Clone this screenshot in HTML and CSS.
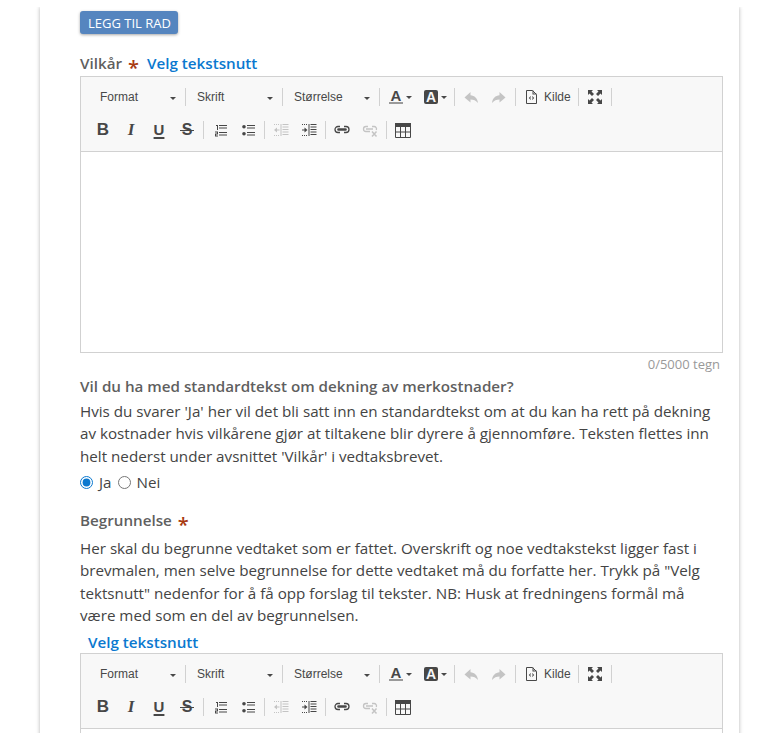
FILE: index.html
```html
<!DOCTYPE html>
<html lang="no">
<head>
  <meta charset="utf-8">
  <link rel="stylesheet" href="styles.css">
  <title>Vedtak</title>
</head>
<body>
  <!-- toolbar icons, used by both editors -->
  <svg class="icon-defs" width="0" height="0">
    <symbol id="i-ol" viewBox="0 0 16 16"><path d="M4 3h2v5H5V4H4zM3 9.500h3v3H4v1h2v1H3v-3h2v-1H3z"/><path d="M7 3h8v1H7zM7 5.500h8v1H7zM7 10h8v1H7zM7 12.500h8v1H7z"/></symbol>
    <symbol id="i-ul" viewBox="0 0 16 16"><circle cx="4" cy="4.800" r="1.800"/><circle cx="4" cy="11.800" r="1.800"/><path d="M7 3h8v1H7zM7 5.500h8v1H7zM7 10h8v1H7zM7 12.500h8v1H7z"/></symbol>
    <symbol id="i-outdent" viewBox="0 0 16 16"><path d="M7.500 2h1v12h-1zM9.500 2h6v1h-6zM9.500 4.500h6v1h-6zM9.500 7h6v1h-6zM9.500 9.500h6v1h-6zM9.500 12h6v1h-6z"/><path d="M1 8l3-2.500V7.500h2.500v1H4v2z"/><path d="M1 2h1v1H1zM3 2h1v1H3zM5 2h1v1H5zM1 13h1v1H1zM3 13h1v1H3zM5 13h1v1H5z"/></symbol>
    <symbol id="i-indent" viewBox="0 0 16 16"><path d="M7.500 2h1v12h-1zM9.500 2h6v1h-6zM9.500 4.500h6v1h-6zM9.500 7h6v1h-6zM9.500 9.500h6v1h-6zM9.500 12h6v1h-6z"/><path d="M6.500 8L3.500 5.500V7.500H1v1h2.500v2z"/><path d="M1 2h1v1H1zM3 2h1v1H3zM5 2h1v1H5zM1 13h1v1H1zM3 13h1v1H3zM5 13h1v1H5z"/></symbol>
    <symbol id="i-link" viewBox="0 0 16 16"><path fill="none" stroke="currentColor" stroke-width="1.300" d="M6 4.500H4a3 3 0 0 0 0 6h2M10 4.500h2a3 3 0 0 1 0 6h-2M4.500 6.800h7a.7.7 0 0 1 0 1.400h-7a.7.7 0 0 1 0-1.400z"/></symbol>
    <symbol id="i-unlink" viewBox="0 0 16 16"><path fill="none" stroke="currentColor" stroke-width="1.300" d="M6 4.500H4a2.500 2.500 0 0 0 0 5h4M10 4.500h2a2.500 2.500 0 0 1 2.300 3.500M4 7h7"/><path fill="none" stroke="currentColor" stroke-width="1.500" d="M10 9.500l4.500 5M14.500 9.500L10 14.500"/></symbol>
    <symbol id="i-table" viewBox="0 0 16 16"><path d="M0 1h16v4H0z"/><path fill="none" stroke="currentColor" d="M.5 4.500h15v11H.5zM.5 10h15M5.500 4.500v11M10.500 4.500v11"/></symbol>
    <symbol id="i-undo" viewBox="0 0 16 16"><path d="M7.500 3L1.500 8.500l6 5v-3c3 0 5.500 1 7.500 3.500-.5-5-3.500-7.500-7.500-7.800z"/></symbol>
    <symbol id="i-redo" viewBox="0 0 16 16"><path d="M8.500 3l6 5.500-6 5v-3c-3 0-5.500 1-7.500 3.500.5-5 3.500-7.500 7.500-7.800z"/></symbol>
    <symbol id="i-source" viewBox="0 0 16 16"><path fill="none" stroke="currentColor" d="M2.500 1.500h6l4 4v9h-10z"/><path d="M8.500 1.500v4h4v-1h-3v-3zM6.800 7L4.800 9l2 2v-1.300L6 9l.8-.7zM8.200 7l2 2-2 2V9.700L9 9l-.8-.7z"/></symbol>
    <symbol id="i-maximize" viewBox="0 0 16 16"><path d="M1 1h5L4.500 2.500 7 5 5 7 2.500 4.500 1 6zM15 1v5l-1.500-1.500L11 7 9 5l2.500-2.500L10 1zM1 15v-5l1.500 1.500L5 9l2 2-2.500 2.500L6 15zM15 15h-5l1.500-1.500L9 11l2-2 2.500 2.500L15 10z"/></symbol>
  </svg>

  <div class="page">
    <main class="card">
      <button class="add-row" type="button">Legg til rad</button>

      <div class="label-row label-row-first">
        <span class="field-label">Vilkår</span>
        <span class="required">*</span>
        <a class="snippet-link" href="#">Velg tekstsnutt</a>
      </div>

      <div class="editor">
        <div class="toolbar">
          <div class="tool-row tool-row-combos">
            <span class="combo">Format<i class="caret"></i></span><span class="sep"></span>
            <span class="combo">Skrift<i class="caret"></i></span><span class="sep"></span>
            <span class="combo">Størrelse<i class="caret"></i></span><span class="sep"></span>
            <span class="tool tool-drop"><span class="letter-color">A</span><i class="color-bar"></i><i class="caret"></i></span>
            <span class="tool tool-drop"><span class="letter-bg">A</span><i class="caret"></i></span><span class="sep"></span>
            <span class="tool off"><svg class="icon"><use href="#i-undo"/></svg></span>
            <span class="tool off"><svg class="icon"><use href="#i-redo"/></svg></span><span class="sep"></span>
            <span class="tool tool-source"><svg class="icon"><use href="#i-source"/></svg>Kilde</span><span class="sep"></span>
            <span class="tool"><svg class="icon"><use href="#i-maximize"/></svg></span><span class="sep"></span>
          </div>
          <div class="tool-row">
            <span class="tool letter">B</span>
            <span class="tool letter letter-italic">I</span>
            <span class="tool letter letter-underline">U</span>
            <span class="tool letter letter-strike">S</span><span class="sep"></span>
            <span class="tool"><svg class="icon"><use href="#i-ol"/></svg></span>
            <span class="tool"><svg class="icon"><use href="#i-ul"/></svg></span><span class="sep"></span>
            <span class="tool off"><svg class="icon"><use href="#i-outdent"/></svg></span>
            <span class="tool"><svg class="icon"><use href="#i-indent"/></svg></span><span class="sep"></span>
            <span class="tool"><svg class="icon"><use href="#i-link"/></svg></span>
            <span class="tool off"><svg class="icon"><use href="#i-unlink"/></svg></span><span class="sep"></span>
            <span class="tool"><svg class="icon"><use href="#i-table"/></svg></span>
          </div>
        </div>
        <div class="editor-body"></div>
      </div>
      <div class="counter">0/5000 tegn</div>

      <div class="field-label question">Vil du ha med standardtekst om dekning av merkostnader?</div>
      <p class="help">Hvis du svarer 'Ja' her vil det bli satt inn en standardtekst om at du kan ha rett på dekning av kostnader hvis vilkårene gjør at tiltakene blir dyrere å gjennomføre. Teksten flettes inn helt nederst under avsnittet 'Vilkår' i vedtaksbrevet.</p>
      <div class="radios">
        <label class="radio"><input type="radio" name="standardtekst" checked>Ja</label>
        <label class="radio"><input type="radio" name="standardtekst">Nei</label>
      </div>

      <div class="label-row label-row-reason">
        <span class="field-label">Begrunnelse</span>
        <span class="required">*</span>
      </div>
      <p class="help">Her skal du begrunne vedtaket som er fattet. Overskrift og noe vedtakstekst ligger fast i brevmalen, men selve begrunnelse for dette vedtaket må du forfatte her. Trykk på "Velg tektsnutt" nedenfor for å få opp forslag til tekster. NB: Husk at fredningens formål må være med som en del av begrunnelsen.</p>
      <a class="snippet-link snippet-link-block" href="#">Velg tekstsnutt</a>

      <div class="editor">
        <div class="toolbar">
          <div class="tool-row tool-row-combos">
            <span class="combo">Format<i class="caret"></i></span><span class="sep"></span>
            <span class="combo">Skrift<i class="caret"></i></span><span class="sep"></span>
            <span class="combo">Størrelse<i class="caret"></i></span><span class="sep"></span>
            <span class="tool tool-drop"><span class="letter-color">A</span><i class="color-bar"></i><i class="caret"></i></span>
            <span class="tool tool-drop"><span class="letter-bg">A</span><i class="caret"></i></span><span class="sep"></span>
            <span class="tool off"><svg class="icon"><use href="#i-undo"/></svg></span>
            <span class="tool off"><svg class="icon"><use href="#i-redo"/></svg></span><span class="sep"></span>
            <span class="tool tool-source"><svg class="icon"><use href="#i-source"/></svg>Kilde</span><span class="sep"></span>
            <span class="tool"><svg class="icon"><use href="#i-maximize"/></svg></span><span class="sep"></span>
          </div>
          <div class="tool-row">
            <span class="tool letter">B</span>
            <span class="tool letter letter-italic">I</span>
            <span class="tool letter letter-underline">U</span>
            <span class="tool letter letter-strike">S</span><span class="sep"></span>
            <span class="tool"><svg class="icon"><use href="#i-ol"/></svg></span>
            <span class="tool"><svg class="icon"><use href="#i-ul"/></svg></span><span class="sep"></span>
            <span class="tool off"><svg class="icon"><use href="#i-outdent"/></svg></span>
            <span class="tool"><svg class="icon"><use href="#i-indent"/></svg></span><span class="sep"></span>
            <span class="tool"><svg class="icon"><use href="#i-link"/></svg></span>
            <span class="tool off"><svg class="icon"><use href="#i-unlink"/></svg></span><span class="sep"></span>
            <span class="tool"><svg class="icon"><use href="#i-table"/></svg></span>
          </div>
        </div>
        <div class="editor-body"></div>
      </div>
    </main>
  </div>
</body>
</html>
```

FILE: styles.css
```css
html, body {
  height: 733px;
  margin: 0;
  overflow: hidden;
  background-color: #fff;
}

body {
  font-family: "Open Sans", sans-serif;
  font-size: 15.2px;
  line-height: 22.5px;
  color: #444;
}

.icon-defs {
  position: absolute;
}

.page {
  height: 726px;
  margin-top: 7px;
  padding: 0 30px;
  overflow: hidden;
}

.card {
  width: 699px;
  height: 900px;
  margin-left: 10px;
  padding: 4px 16px 0 40px;
  box-sizing: border-box;
  background-color: #fff;
  box-shadow: 0 0 4px rgba(0, 0, 0, 0.3);
}

.add-row {
  display: block;
  width: 98px;
  height: 23px;
  padding: 0 0 0 1px;
  border: none;
  border-radius: 3px;
  background-color: #5585bf;
  box-shadow: 0 1px 3px rgba(0, 0, 0, 0.35);
  color: #fff;
  font-family: "Open Sans", sans-serif;
  font-size: 13px;
  font-weight: 400;
  text-transform: uppercase;
}

.label-row {
  display: flex;
  align-items: baseline;
}

.label-row-first {
  margin-top: 18px;
  height: 24px;
}

.label-row-reason {
  margin-top: 15px;
}

.field-label {
  font-weight: 600;
  color: #5f5f5f;
}

/* the asterisk sits high in the font, so pad it down to the label's middle */
.required {
  align-self: flex-start;
  margin-left: 6px;
  padding-top: 6px;
  color: #a83a10;
  font-size: 20px;
  line-height: 20px;
  font-weight: 600;
}

.snippet-link {
  margin-left: 8px;
  color: #0a78cf;
  font-weight: 600;
  text-decoration: none;
}

.snippet-link-block {
  display: block;
  margin: 4px 0 0 8px;
  height: 22.5px;
}

/* editor */
.editor {
  border: 1px solid #d1d1d1;
  width: 643px;
  box-sizing: border-box;
  font-family: "Liberation Sans", Arial, sans-serif;
  font-size: 12px;
}

.toolbar {
  padding: 4px 0 5px 8px;
  background-color: #f8f8f8;
  border-bottom: 1px solid #d1d1d1;
}

.tool-row {
  display: flex;
  align-items: center;
  height: 32px;
}

.tool-row + .tool-row {
  margin-top: 1px;
}

.tool-row-combos {
  margin-left: 2px;
}

.sep {
  flex: none;
  width: 1px;
  height: 18px;
  margin: 0 2px;
  background-color: #d1d1d1;
}

.combo {
  position: relative;
  flex: none;
  width: 92px;
  padding-left: 9px;
  box-sizing: border-box;
  color: #484848;
}

.combo .caret {
  position: absolute;
  right: 7px;
  top: 11px;
}

.caret {
  display: block;
  width: 0;
  height: 0;
  border-left: 3px solid transparent;
  border-right: 3px solid transparent;
  border-top: 3px solid #484848;
}

.tool {
  flex: none;
  display: flex;
  align-items: center;
  justify-content: center;
  width: 28px;
  color: #474747;
}

.tool.off {
  color: #c4c4c4;
}

/* bold, italic, underline, strike buttons */
.letter {
  height: 16px;
  font-size: 17px;
  line-height: 16px;
  font-weight: 700;
}

.letter-italic {
  font-family: "Liberation Serif", "Times New Roman", serif;
  font-style: italic;
}

.letter-underline {
  font-size: 15px;
  text-decoration: underline;
  text-decoration-thickness: 1.5px;
  text-underline-offset: 2px;
}

.letter-strike {
  position: relative;
  font-size: 16px;
}

/* the stroke runs past the S on both sides */
.letter-strike::after {
  content: "";
  position: absolute;
  left: 7px;
  top: 8px;
  width: 14px;
  height: 1px;
  background-color: #474747;
}

.tool-drop {
  position: relative;
  width: 35px;
  height: 16px;
  justify-content: flex-start;
  padding-left: 7px;
  box-sizing: border-box;
}

.tool-drop .caret {
  flex: none;
  margin-left: 3px;
}

.letter-color {
  flex: none;
  align-self: flex-start;
  width: 14px;
  font-size: 15px;
  line-height: 13px;
  font-weight: 700;
  text-align: center;
}

.letter-bg {
  flex: none;
  width: 14px;
  height: 14px;
  border-radius: 2px;
  background-color: #474747;
  color: #f8f8f8;
  font-size: 14px;
  line-height: 14px;
  font-weight: 700;
  text-align: center;
}

.color-bar {
  position: absolute;
  left: 7px;
  top: 13px;
  width: 14px;
  height: 2px;
  background-color: #9a9a9a;
}

.tool-source {
  width: 58px;
  justify-content: flex-start;
  padding-left: 6px;
  box-sizing: border-box;
  gap: 4px;
  color: #484848;
}

.icon {
  flex: none;
  display: block;
  width: 16px;
  height: 16px;
  fill: currentColor;
}

.editor-body {
  height: 200px;
  background-color: #fff;
}

.counter {
  margin: 0 3px 0 0;
  text-align: right;
  color: #999;
  font-size: 13px;
  line-height: 22px;
}

.help {
  margin: 2px 0 0;
  color: #444;
}

.radios {
  display: flex;
  gap: 6px;
  margin-top: 4px;
}

.radio {
  display: flex;
  align-items: center;
}

.radio input {
  width: 13px;
  height: 13px;
  margin: 0 6px 0 0;
  accent-color: #0a78cf;
}
```
